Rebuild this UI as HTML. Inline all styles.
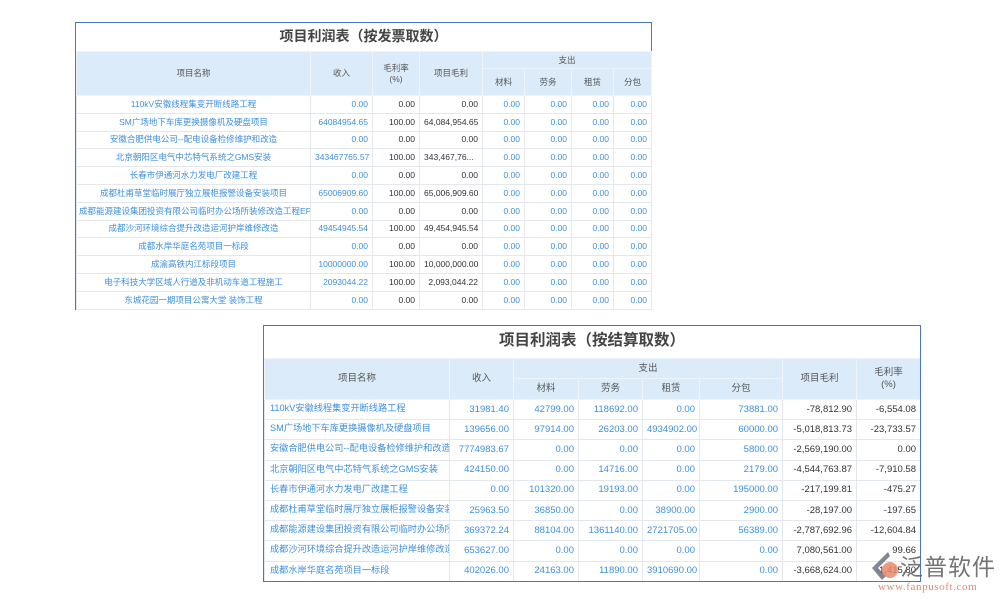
<!DOCTYPE html>
<html><head><meta charset="utf-8"><style>
body{margin:0;width:1000px;height:600px;background:#fff;position:relative;overflow:hidden;font-family:"Liberation Sans","Noto Sans CJK SC",sans-serif;}
.box{position:absolute;border:1px solid #4a74c9;background:#fff;box-sizing:border-box;}
.title{text-align:center;color:#444;font-weight:bold;}
table{border-collapse:collapse;table-layout:fixed;width:100%;}
td,th{border:1px solid #e3e8ee;padding:0 4px;white-space:nowrap;overflow:hidden;text-overflow:clip;vertical-align:middle;line-height:11px;}
th{background:#dcebf9;color:#555;font-weight:normal;text-align:center;border-color:#eef4fb;}
.b{color:#3d8fe0;}
.d{color:#333;}
.r{text-align:right;}
.c{text-align:center;}
#t1 td,#t1 th{font-size:8.5px;}
#t2 td,#t2 th{font-size:9.5px;line-height:12px;}
#t2 td.n{font-size:9.2px;padding-left:5px;padding-right:0;padding-bottom:3px;}
</style></head><body>

<div class="box" style="left:75px;top:22px;width:577px;height:288px;">
<div class="title" style="height:28px;line-height:26px;font-size:14px;">项目利润表（按发票取数）</div>
<table id="t1">
<colgroup><col style="width:234px"><col style="width:62px"><col style="width:47px"><col style="width:63px"><col style="width:42px"><col style="width:47px"><col style="width:42px"><col style="width:38px"></colgroup>
<tr style="height:17px"><th rowspan="2">项目名称</th><th rowspan="2">收入</th><th rowspan="2">毛利率<br>(%)</th><th rowspan="2">项目毛利</th><th colspan="4">支出</th></tr>
<tr style="height:27px"><th>材料</th><th>劳务</th><th>租赁</th><th>分包</th></tr>
<tbody>
<tr style="height:17.8px"><td class="b c">110kV安徽线程集变开断线路工程</td><td class="b r">0.00</td><td class="d r">0.00</td><td class="d r">0.00</td><td class="b r">0.00</td><td class="b r">0.00</td><td class="b r">0.00</td><td class="b r">0.00</td></tr>
<tr style="height:17.8px"><td class="b c">SM广场地下车库更换摄像机及硬盘项目</td><td class="b r">64084954.65</td><td class="d r">100.00</td><td class="d r">64,084,954.65</td><td class="b r">0.00</td><td class="b r">0.00</td><td class="b r">0.00</td><td class="b r">0.00</td></tr>
<tr style="height:17.8px"><td class="b c">安徽合肥供电公司--配电设备检修维护和改造</td><td class="b r">0.00</td><td class="d r">0.00</td><td class="d r">0.00</td><td class="b r">0.00</td><td class="b r">0.00</td><td class="b r">0.00</td><td class="b r">0.00</td></tr>
<tr style="height:17.8px"><td class="b c">北京朝阳区电气中芯特气系统之GMS安装</td><td class="b r">343467765.57</td><td class="d r">100.00</td><td class="d">343,467,76...</td><td class="b r">0.00</td><td class="b r">0.00</td><td class="b r">0.00</td><td class="b r">0.00</td></tr>
<tr style="height:17.8px"><td class="b c">长春市伊通河水力发电厂改建工程</td><td class="b r">0.00</td><td class="d r">0.00</td><td class="d r">0.00</td><td class="b r">0.00</td><td class="b r">0.00</td><td class="b r">0.00</td><td class="b r">0.00</td></tr>
<tr style="height:17.8px"><td class="b c">成都杜甫草堂临时展厅独立展柜报警设备安装项目</td><td class="b r">65006909.60</td><td class="d r">100.00</td><td class="d r">65,006,909.60</td><td class="b r">0.00</td><td class="b r">0.00</td><td class="b r">0.00</td><td class="b r">0.00</td></tr>
<tr style="height:17.8px"><td class="b" style="padding-left:2px">成都能源建设集团投资有限公司临时办公场所装修改造工程EPC总</td><td class="b r">0.00</td><td class="d r">0.00</td><td class="d r">0.00</td><td class="b r">0.00</td><td class="b r">0.00</td><td class="b r">0.00</td><td class="b r">0.00</td></tr>
<tr style="height:17.8px"><td class="b c">成都沙河环境综合提升改造运河护岸维修改造</td><td class="b r">49454945.54</td><td class="d r">100.00</td><td class="d r">49,454,945.54</td><td class="b r">0.00</td><td class="b r">0.00</td><td class="b r">0.00</td><td class="b r">0.00</td></tr>
<tr style="height:17.8px"><td class="b c">成都水岸华庭名苑项目一标段</td><td class="b r">0.00</td><td class="d r">0.00</td><td class="d r">0.00</td><td class="b r">0.00</td><td class="b r">0.00</td><td class="b r">0.00</td><td class="b r">0.00</td></tr>
<tr style="height:17.8px"><td class="b c">成渝高铁内江标段项目</td><td class="b r">10000000.00</td><td class="d r">100.00</td><td class="d r">10,000,000.00</td><td class="b r">0.00</td><td class="b r">0.00</td><td class="b r">0.00</td><td class="b r">0.00</td></tr>
<tr style="height:17.8px"><td class="b c">电子科技大学区域人行道及非机动车道工程施工</td><td class="b r">2093044.22</td><td class="d r">100.00</td><td class="d r">2,093,044.22</td><td class="b r">0.00</td><td class="b r">0.00</td><td class="b r">0.00</td><td class="b r">0.00</td></tr>
<tr style="height:17.8px"><td class="b c">东城花园一期项目公寓大堂 装饰工程</td><td class="b r">0.00</td><td class="d r">0.00</td><td class="d r">0.00</td><td class="b r">0.00</td><td class="b r">0.00</td><td class="b r">0.00</td><td class="b r">0.00</td></tr>
</tbody></table>
</div>

<div class="box" style="left:263px;top:325px;width:658px;height:257px;overflow:hidden;">
<div class="title" style="height:32px;line-height:30px;font-size:15.5px;">项目利润表（按结算取数）</div>
<table id="t2">
<colgroup><col style="width:185px"><col style="width:64px"><col style="width:65px"><col style="width:64px"><col style="width:57px"><col style="width:83px"><col style="width:74px"><col style="width:64px"></colgroup>
<tr style="height:20px"><th rowspan="2">项目名称</th><th rowspan="2">收入</th><th colspan="4">支出</th><th rowspan="2">项目毛利</th><th rowspan="2">毛利率<br>(%)</th></tr>
<tr style="height:21px"><th>材料</th><th>劳务</th><th>租赁</th><th>分包</th></tr>
<tr style="height:20.2px"><td class="b n">110kV安徽线程集变开断线路工程</td><td class="b r">31981.40</td><td class="b r">42799.00</td><td class="b r">118692.00</td><td class="b r">0.00</td><td class="b r">73881.00</td><td class="d r">-78,812.90</td><td class="d r">-6,554.08</td></tr>
<tr style="height:20.2px"><td class="b n">SM广场地下车库更换摄像机及硬盘项目</td><td class="b r">139656.00</td><td class="b r">97914.00</td><td class="b r">26203.00</td><td class="b r">4934902.00</td><td class="b r">60000.00</td><td class="d r">-5,018,813.73</td><td class="d r">-23,733.57</td></tr>
<tr style="height:20.2px"><td class="b n">安徽合肥供电公司--配电设备检修维护和改造</td><td class="b r">7774983.67</td><td class="b r">0.00</td><td class="b r">0.00</td><td class="b r">0.00</td><td class="b r">5800.00</td><td class="d r">-2,569,190.00</td><td class="d r">0.00</td></tr>
<tr style="height:20.2px"><td class="b n">北京朝阳区电气中芯特气系统之GMS安装</td><td class="b r">424150.00</td><td class="b r">0.00</td><td class="b r">14716.00</td><td class="b r">0.00</td><td class="b r">2179.00</td><td class="d r">-4,544,763.87</td><td class="d r">-7,910.58</td></tr>
<tr style="height:20.2px"><td class="b n">长春市伊通河水力发电厂改建工程</td><td class="b r">0.00</td><td class="b r">101320.00</td><td class="b r">19193.00</td><td class="b r">0.00</td><td class="b r">195000.00</td><td class="d r">-217,199.81</td><td class="d r">-475.27</td></tr>
<tr style="height:20.2px"><td class="b n">成都杜甫草堂临时展厅独立展柜报警设备安装</td><td class="b r">25963.50</td><td class="b r">36850.00</td><td class="b r">0.00</td><td class="b r">38900.00</td><td class="b r">2900.00</td><td class="d r">-28,197.00</td><td class="d r">-197.65</td></tr>
<tr style="height:20.2px"><td class="b n">成都能源建设集团投资有限公司临时办公场所</td><td class="b r">369372.24</td><td class="b r">88104.00</td><td class="b r">1361140.00</td><td class="b r">2721705.00</td><td class="b r">56389.00</td><td class="d r">-2,787,692.96</td><td class="d r">-12,604.84</td></tr>
<tr style="height:20.2px"><td class="b n">成都沙河环境综合提升改造运河护岸维修改造</td><td class="b r">653627.00</td><td class="b r">0.00</td><td class="b r">0.00</td><td class="b r">0.00</td><td class="b r">0.00</td><td class="d r">7,080,561.00</td><td class="d r">99.66</td></tr>
<tr style="height:20.2px"><td class="b n">成都水岸华庭名苑项目一标段</td><td class="b r">402026.00</td><td class="b r">24163.00</td><td class="b r">11890.00</td><td class="b r">3910690.00</td><td class="b r">0.00</td><td class="d r">-3,668,624.00</td><td class="d r">-1,415.80</td></tr>
</table>
</div>

<div style="position:absolute;left:866px;top:548px;width:134px;height:52px;">
<svg width="40" height="34" style="position:absolute;left:0;top:2px" viewBox="0 0 40 34">
<path d="M22 2 L6 18 L16 30 L20 26 L12 18 L24 6 Z" fill="#6b7380" opacity="0.85"/>
<circle cx="24" cy="20" r="8" fill="#e98a6a" opacity="0.85"/>
</svg>
<div style="position:absolute;left:34px;top:0;font-size:23px;color:#666;font-family:'Noto Sans CJK SC',sans-serif;letter-spacing:1px;opacity:.9">泛普软件</div>
<div style="position:absolute;left:12px;top:33px;font-size:11px;color:#e08a70;font-family:'Liberation Serif',serif;letter-spacing:0.6px;">www.fanpusoft.com</div>
</div>
</body></html>
